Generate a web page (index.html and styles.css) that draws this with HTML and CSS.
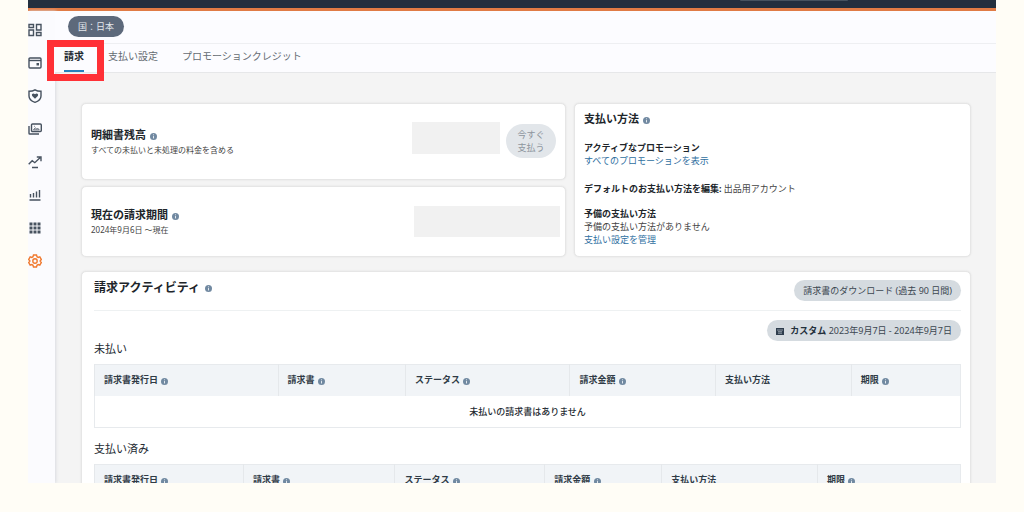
FILE: index.html
```html
<!DOCTYPE html>
<html lang="ja">
<head>
<meta charset="utf-8">
<meta name="viewport" content="width=device-width, initial-scale=1">
<title>請求</title>
<link rel="stylesheet" href="styles.css">
</head>
<body>
<svg class="defs" aria-hidden="true">
  <symbol id="info" viewBox="0 0 8 8"><circle cx="4" cy="4" r="4" fill="#7189a1"/><path d="M4 3.5v2.7M4 1.6v1" stroke="#e8eef4" stroke-width="1.1"/></symbol>
</svg>
<div class="app">
  <header class="topbar"><div class="search"></div></header>
  <div class="shell">
    <nav class="sidebar" aria-label="メニュー">
      <a href="#" aria-label="ダッシュボード"><svg viewBox="0 0 14 14"><path d="M1 1.5h4.5v3H1zM1 7h4.5v5.500H1zM8.500 1.500H13V7H8.500zM8.500 9.500H13v3H8.500z"/></svg></a>
      <a href="#" aria-label="支払い"><svg viewBox="0 0 14 14"><rect x="1" y="2" width="12" height="10" rx="1"/><path d="M1 4.500h12"/><path class="solid" d="M8.500 7h2.500v2.500H8.500z"/></svg></a>
      <a href="#" aria-label="ブランド保護"><svg viewBox="0 0 14 14"><path d="M7 .8c2 1.300 4 1.500 6 1.500V7c0 3-2.500 5.200-6 6.300C3.500 12.200 1 10 1 7V2.300c2 0 4-.2 6-1.500z"/><path class="solid" d="M7 9.800 4.200 7C3.100 5.600 5 3.500 7 5.300 9 3.500 10.900 5.600 9.800 7z"/></svg></a>
      <a href="#" aria-label="クリエイティブ"><svg viewBox="0 0 14 14"><rect x="3.500" y="2" width="9.800" height="7.500" rx="1"/><path d="M1 4v7.200q0 .8.800.8H11"/><path class="thin" d="m5.500 7.800 1.700-2 1.300 1.200 1-1 1.700 1.800zM6 4.300h.8"/></svg></a>
      <a href="#" aria-label="レポート"><svg viewBox="0 0 14 14"><path d="m.7 9.200 3.500-3.500 2.600 2L12 2.800M8.800 2H13v4.200M4 12.500h6"/></svg></a>
      <a href="#" aria-label="分析"><svg viewBox="0 0 14 14"><path d="M2.500 9.500V6M5.500 9.500V5M8.500 9.500V3.500M11.500 9.500V2M1.500 12h11"/></svg></a>
      <a href="#" aria-label="アプリ"><svg viewBox="0 0 14 14"><path class="solid" d="M1.500 1.500h3v3h-3zM5.500 1.500h3v3h-3zM9.500 1.500h3v3h-3zM1.500 5.500h3v3h-3zM5.500 5.500h3v3h-3zM9.500 5.500h3v3h-3zM1.500 9.500h3v3h-3zM5.500 9.500h3v3h-3zM9.500 9.500h3v3h-3z"/></svg></a>
      <a href="#" class="current" aria-label="設定"><svg viewBox="0 0 14 14"><path d="m5.500 1 3 0 .5 1.700 1.200.7 1.600-.5 1.500 2.600L12.100 7l1.200 1.500-1.500 2.600-1.600-.5-1.200.7-.5 1.700h-3L5 11.300l-1.200-.7-1.600.5L.7 8.500 1.900 7 .7 5.500l1.500-2.600 1.600.5L5 2.700z"/><circle cx="7" cy="7" r="2.200"/></svg></a>
    </nav>
    <main class="main">
      <div class="country-row"><button class="country" type="button">国：日本</button></div>
      <nav class="tabs" aria-label="請求と支払い">
        <a href="#" class="tab active" aria-current="page">請求</a>
        <a href="#" class="tab">支払い設定</a>
        <a href="#" class="tab promo">プロモーションクレジット</a>
      </nav>
      <div class="content">
        <div class="summary">
          <div class="balances">
            <section class="card balance">
              <div class="balance-text">
                <h2>明細書残高 <svg class="info"><use href="#info"/></svg></h2>
                <p>すべての未払いと未処理の料金を含める</p>
              </div>
              <div class="amount"></div>
              <button class="pay" type="button" disabled>今すぐ<br>支払う</button>
            </section>
            <section class="card balance period">
              <div class="balance-text">
                <h2>現在の請求期間 <svg class="info"><use href="#info"/></svg></h2>
                <p>2024年9月6日 ～現在</p>
              </div>
              <div class="amount wide"></div>
            </section>
          </div>
          <section class="card methods">
            <h2>支払い方法 <svg class="info"><use href="#info"/></svg></h2>
            <div class="method"><strong>アクティブなプロモーション</strong><a href="#">すべてのプロモーションを表示</a></div>
            <p class="method-line"><strong>デフォルトのお支払い方法を編集:</strong> 出品用アカウント</p>
            <div class="method"><strong>予備の支払い方法</strong><span>予備の支払い方法がありません</span><a href="#">支払い設定を管理</a></div>
          </section>
        </div>
        <section class="card activity">
          <div class="activity-head">
            <h2>請求アクティビティ <svg class="info"><use href="#info"/></svg></h2>
            <button class="pill" type="button">請求書のダウンロード (過去 90 日間)</button>
          </div>
          <div class="filter">
            <button class="pill" type="button"><svg class="calendar" viewBox="0 0 8 8"><path d="M0 1h8v7H0z" fill="#2e3d4d"/><path d="M1 3h6M2 4.700h4M2 6.200h4" stroke="#b9c3cc" stroke-width=".7"/></svg><span><strong>カスタム</strong> 2023年9月7日 - 2024年9月7日</span></button>
          </div>
          <h3>未払い</h3>
          <table class="unpaid">
            <colgroup><col class="u1"><col class="u2"><col class="u3"><col class="u4"><col class="u5"><col class="u6"></colgroup>
            <thead><tr>
              <th scope="col">請求書発行日 <svg class="info"><use href="#info"/></svg></th>
              <th scope="col">請求書 <svg class="info"><use href="#info"/></svg></th>
              <th scope="col">ステータス <svg class="info"><use href="#info"/></svg></th>
              <th scope="col">請求金額 <svg class="info"><use href="#info"/></svg></th>
              <th scope="col">支払い方法</th>
              <th scope="col">期限 <svg class="info"><use href="#info"/></svg></th>
            </tr></thead>
            <tbody><tr><td colspan="6">未払いの請求書はありません</td></tr></tbody>
          </table>
          <h3 class="paid-title">支払い済み</h3>
          <table class="paid">
            <colgroup><col class="p1"><col class="p2"><col class="p3"><col class="p4"><col class="p5"><col class="p6"></colgroup>
            <thead><tr>
              <th scope="col">請求書発行日 <svg class="info"><use href="#info"/></svg></th>
              <th scope="col">請求書 <svg class="info"><use href="#info"/></svg></th>
              <th scope="col">ステータス <svg class="info"><use href="#info"/></svg></th>
              <th scope="col">請求金額 <svg class="info"><use href="#info"/></svg></th>
              <th scope="col">支払い方法</th>
              <th scope="col">期限 <svg class="info"><use href="#info"/></svg></th>
            </tr></thead>
          </table>
        </section>
      </div>
    </main>
  </div>
</div>
</body>
</html>
```
FILE: styles.css
```css
* { box-sizing: border-box; }

body {
  margin: 0;
  height: 100vh;
  padding: 0 28px 29px;
  background: #fffdf6;
  color: #232a31;
  font: 9px/13px "Noto Sans", "Noto Sans CJK JP", sans-serif;
  overflow: hidden;
}

h2, h3, p { margin: 0; }
a { color: #2f6f9f; text-decoration: none; }
button { font: inherit; border: 0; }
.defs { position: absolute; width: 0; height: 0; }

.app {
  display: flex;
  flex-direction: column;
  height: 100%;
  overflow: hidden;
  background: #f4f4f4;
}

.topbar {
  flex: none;
  background: #232f3e;
  border-bottom: 3px solid #e07b45;
  padding: 0 148px 7px 0;
}
.search {
  width: 108px;
  height: 1px;
  margin-left: auto;
  background: #46525f;
  border-radius: 0 0 4px 4px;
}

.shell { display: flex; flex: 1; min-height: 0; }

.sidebar {
  display: flex;
  flex-direction: column;
  flex: none;
  gap: 19px;
  width: 27px;
  padding-top: 12px;
  background: #fbfbfe;
  box-shadow: 1px 0 3px #d9dbe0;
}
.sidebar a { height: 14px; color: #47525f; }
.sidebar .current { color: #f07a30; }
.sidebar svg {
  display: block;
  width: 14px;
  height: 14px;
  fill: none;
  stroke: currentColor;
  stroke-width: 1.4;
}
.sidebar .solid { fill: currentColor; stroke: none; }
.sidebar .thin { stroke-width: 0.8; }

.main { flex: 1; min-width: 0; }

.country-row {
  padding: 5px 13px 6px;
  background: #fcfcff;
  border-bottom: 1px solid #eeeff2;
}
.country {
  display: block;
  padding: 4px 10px;
  border-radius: 11px;
  background: #5d697b;
  color: #e3e7ec;
}

.tabs {
  display: flex;
  gap: 24px;
  padding: 0 9px;
  background: #fcfcff;
  border-bottom: 1px solid #e6e7e9;
  font-size: 10px;
}
.tab { position: relative; padding: 5px 0 8px; line-height: 15px; color: #656b72; }
.tab.active {
  padding-bottom: 6px;
  border-bottom: 2px solid #2680bd;
  color: #232a31;
  font-weight: 700;
}
/* Highlight frame drawn over the selected tab */
.tab.active::after {
  content: "";
  position: absolute;
  inset: -4px -20px -11px -17px;
  border: 7px solid #ff3036;
}

.content { padding: 30px 25px 0 26px; }

.card {
  background: #fff;
  border: 1px solid #e6e6e6;
  border-radius: 5px;
  box-shadow: 0 0 2px #dedede;
}
.card h2 { font-size: 11px; line-height: 16px; color: #20252a; }
.info { width: 7px; height: 7px; margin-left: 1px; vertical-align: -1px; }

.summary { display: grid; grid-template-columns: 485fr 397fr; gap: 8px; }
.balances { display: grid; gap: 6px; }
.balance {
  display: flex;
  align-items: center;
  gap: 6px;
  padding: 18px 9px 19px;
}
.balance-text { flex: 1; }
.balance p { font-size: 8px; color: #444; }
.amount { width: 88px; height: 32px; margin-bottom: 6px; background: #f1f1f1; }
.amount.wide { width: 146px; height: 31px; margin: 0; }
.period { padding: 19px 5px 19px 9px; }
.pay {
  width: 50px;
  padding: 4px 0;
  border-radius: 17px;
  background: #e2e6ea;
  color: #8d959d;
}

.methods { padding: 7px 9px 9px; }
.method { display: flex; flex-direction: column; align-items: flex-start; margin-top: 12px; }
.method-line { margin: 15px 0 12px; }
.methods h2 + .method { margin-top: 14px; }
.methods strong { color: #20252a; }
.methods p, .methods span { color: #444; }

.activity { margin-top: 14px; padding: 8px 9px 20px 12px; }
.activity-head {
  display: flex;
  align-items: flex-start;
  justify-content: space-between;
  padding-bottom: 9px;
  border-bottom: 1px solid #eef1f2;
}
.activity-head h2 { font-size: 12px; }
.activity-head .info { margin-left: 2px; vertical-align: 0; }
.pill {
  display: flex;
  align-items: center;
  gap: 6px;
  padding: 4px 9px;
  border-radius: 11px;
  background: #d5dbe0;
  color: #3c4751;
}
.pill strong { color: #232f3b; }
.calendar { width: 8px; height: 8px; }
.filter { display: flex; justify-content: flex-end; padding-top: 9px; }
.activity h3 { font-size: 11px; line-height: 15px; font-weight: 400; }
.activity .paid-title { margin-top: 13px; }

table {
  width: 100%;
  margin-top: 8px;
  table-layout: fixed;
  border-collapse: collapse;
  border: 1px solid #e7eaed;
}
th {
  padding: 8px 9px 10px;
  border-left: 1px solid #e5e8eb;
  background: #f1f4f7;
  color: #303b46;
  text-align: left;
  white-space: nowrap;
}
th .info { vertical-align: -2px; }
td { padding: 9px; text-align: center; font-weight: 500; }
.u1 { width: 21.2%; } .u2 { width: 14.7%; } .u3 { width: 19%; } .u4 { width: 16.8%; } .u5 { width: 15.7%; } .u6 { width: 12.6%; }
.p1 { width: 17.2%; } .p2 { width: 17.5%; } .p3 { width: 17.3%; } .p4 { width: 13.5%; } .p5 { width: 18%; } .p6 { width: 16.5%; }
```
